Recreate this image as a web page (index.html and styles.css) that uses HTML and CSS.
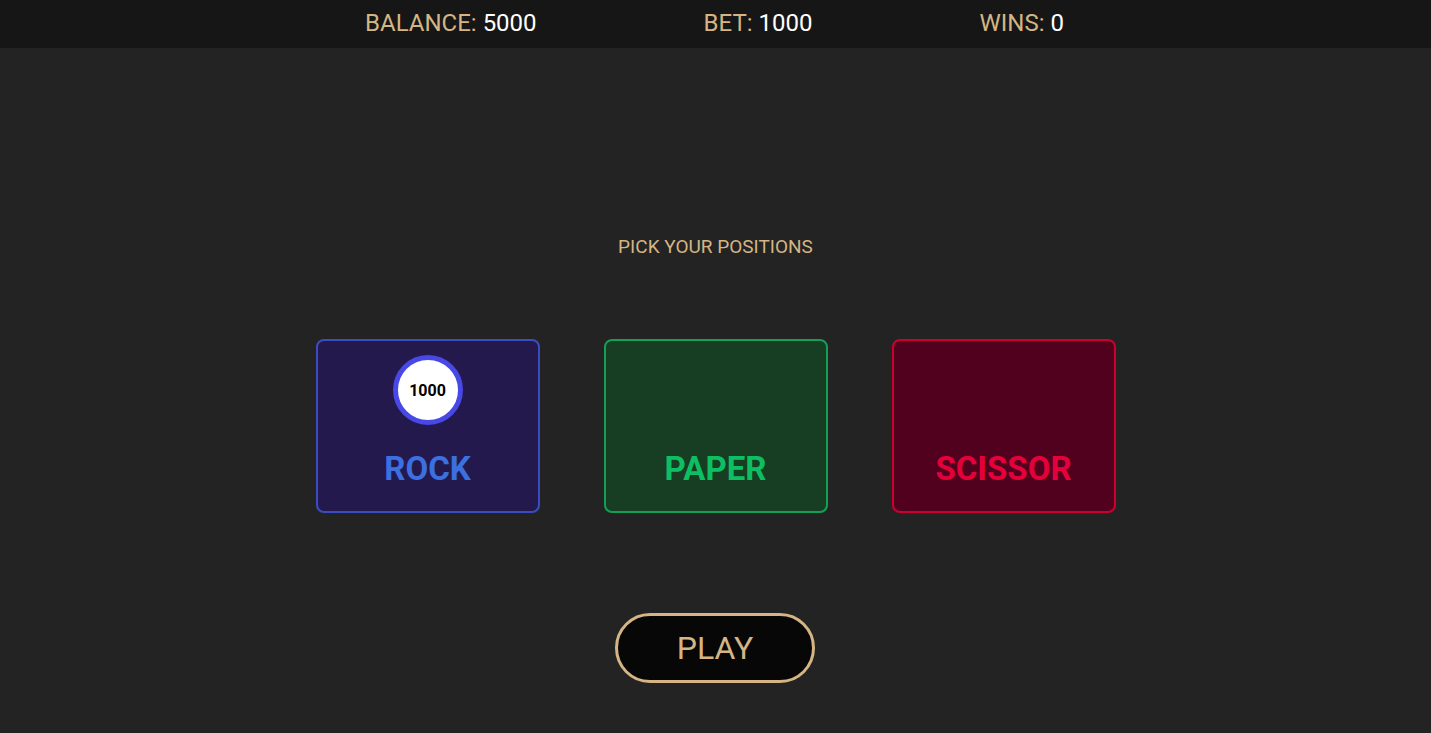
FILE: index.html
```html
<!DOCTYPE html>
<html>
<head>
<meta charset="utf-8">
<link rel="stylesheet" href="styles.css">
</head>
<body>
<header class="topbar">
  <div class="stat"><span class="label">BALANCE:</span> <span class="value">5000</span></div>
  <div class="stat"><span class="label">BET:</span> <span class="value">1000</span></div>
  <div class="stat"><span class="label">WINS:</span> <span class="value">0</span></div>
</header>
<main class="game">
  <p class="prompt">PICK YOUR POSITIONS</p>
  <div class="cards">
    <div class="card rock">
      <div class="chip-slot"><div class="chip">1000</div></div>
      <div class="card-label">ROCK</div>
    </div>
    <div class="card paper">
      <div class="chip-slot"></div>
      <div class="card-label">PAPER</div>
    </div>
    <div class="card scissor">
      <div class="chip-slot"></div>
      <div class="card-label">SCISSOR</div>
    </div>
  </div>
  <button class="play">PLAY</button>
</main>
</body>
</html>
```
FILE: styles.css
```css
* { box-sizing: border-box; }
html, body {
  margin: 0;
  padding: 0;
  height: 100%;
}
body {
  background: #232323;
  font-family: Roboto, "Liberation Sans", sans-serif;
  overflow: hidden;
}
.topbar {
  height: 48px;
  background: #161616;
  display: flex;
  justify-content: center;
  align-items: center;
  gap: 167px;
  font-size: 24px;
  line-height: 1;
  padding-bottom: 2px;
  padding-right: 2px;
}
.label { color: #d4b583; }
.value { color: #ffffff; }
.game {
  display: flex;
  flex-direction: column;
  align-items: center;
}
.prompt {
  margin: 189px 0 0 0;
  font-size: 19px;
  line-height: 20px;
  color: #d4b583;
}
.cards {
  display: flex;
  gap: 64px;
  margin-top: 82px;
}
.card {
  width: 224px;
  height: 174px;
  border: 2px solid;
  border-radius: 8px;
  display: flex;
  flex-direction: column;
  align-items: center;
}
.chip-slot {
  height: 70px;
  margin-top: 14px;
  display: flex;
  align-items: center;
  justify-content: center;
}
.chip {
  width: 70px;
  height: 70px;
  border-radius: 50%;
  background: #ffffff;
  border: 5px solid #4848e6;
  display: flex;
  align-items: center;
  justify-content: center;
  font-size: 16px;
  font-weight: 700;
  color: #000;
}
.card-label {
  margin-top: 26px;
  font-size: 33px;
  font-weight: 700;
  line-height: 36px;
}
.rock { background: #24194d; border-color: #3a4dc0; }
.rock .card-label { color: #3c6fe0; }
.paper { background: #173d23; border-color: #13a055; }
.paper .card-label { color: #0dbf62; }
.scissor { background: #51001d; border-color: #cc0030; }
.scissor .card-label { color: #e5003b; }
.play {
  margin-top: 100px;
  margin-right: 1px;
  width: 200px;
  height: 70px;
  border-radius: 35px;
  border: 3px solid #d4b583;
  background: #070707;
  color: #d4b583;
  font-family: Roboto, "Liberation Sans", sans-serif;
  font-size: 32px;
  padding: 0;
}
```
